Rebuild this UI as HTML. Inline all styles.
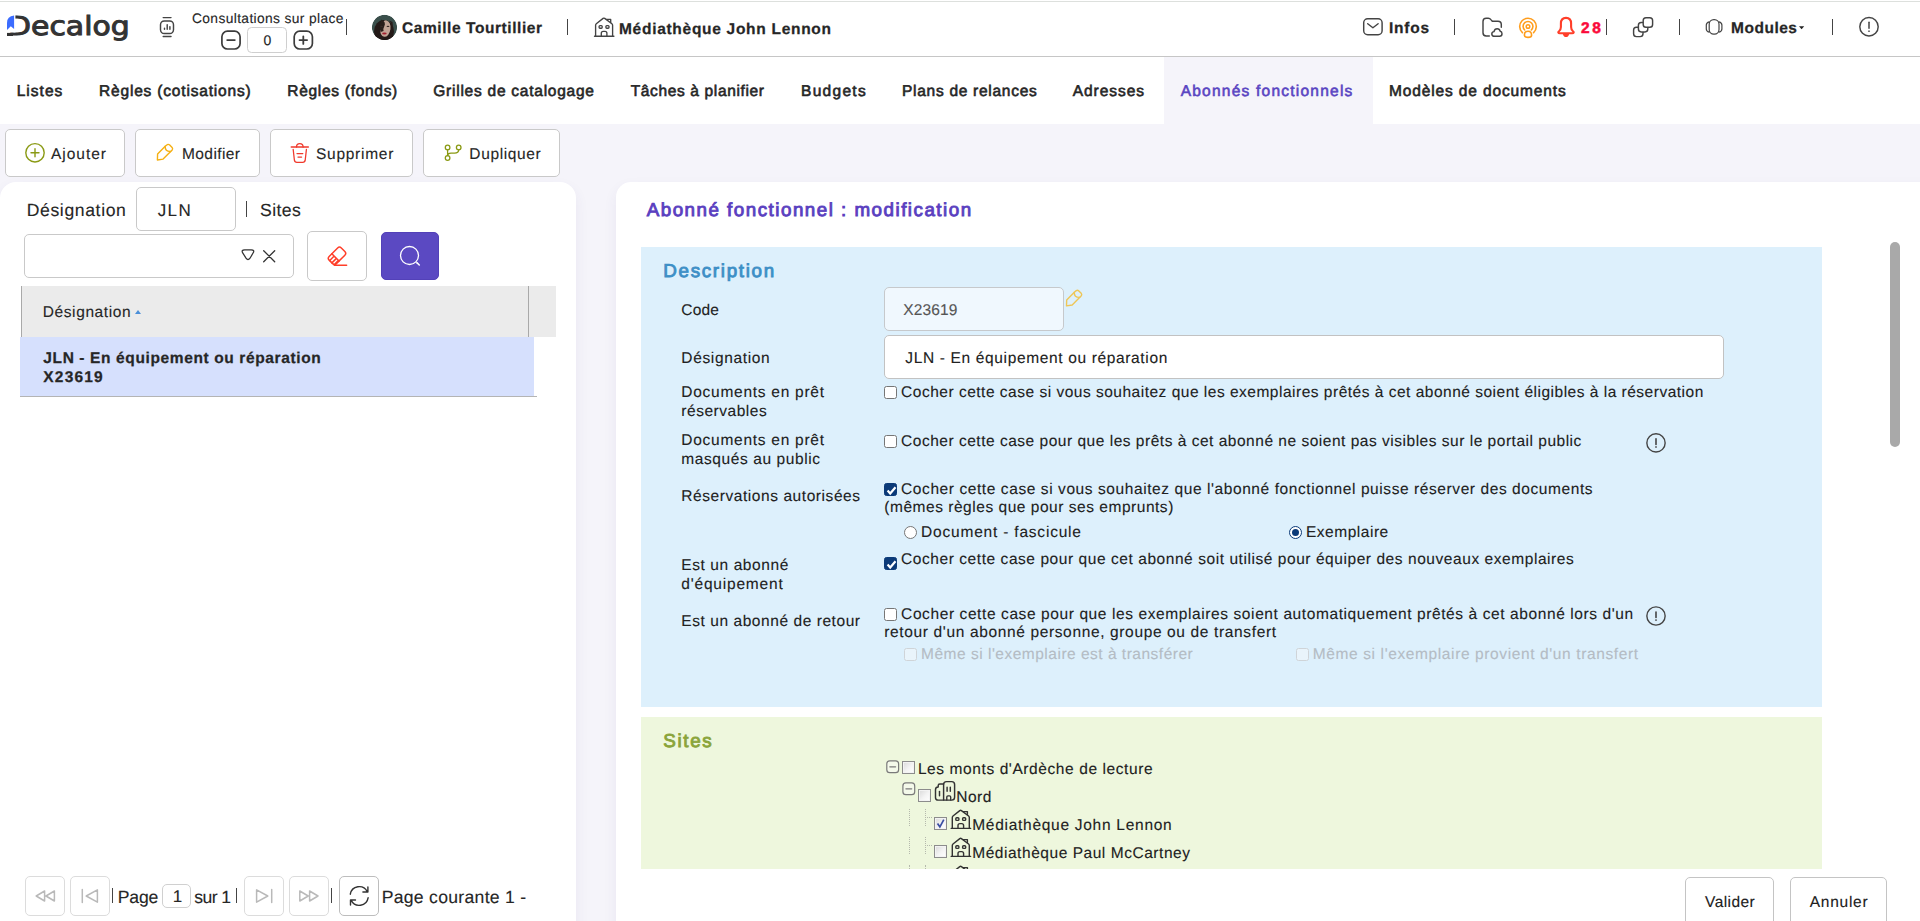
<!DOCTYPE html>
<html lang="fr"><head><meta charset="utf-8"><title>Decalog - Abonnés fonctionnels</title>
<style>
*{box-sizing:border-box;margin:0;padding:0}
html,body{width:1920px;height:921px;overflow:hidden}
body{background:#f5f4fa;font-family:"Liberation Sans",sans-serif;position:relative;color:#212121}
.a{position:absolute}
.t{position:absolute;white-space:pre;line-height:1;text-rendering:geometricPrecision}
.box{position:absolute;background:#fff;border:1px solid #c9c9c9;border-radius:5px}
svg{position:absolute;overflow:visible}
.sep{width:1px;background:#444}
.cb{width:13px;height:13px;border:1px solid #767676;border-radius:2.5px;background:#fff}
.cb.on{background:#0b3a78;border-color:#0b3a78}
.cb.dis{border-color:#cfd4d8;background:#e9f4fb}
.rd{width:13px;height:13px;border:1px solid #767676;border-radius:50%;background:#fff}
.rd.ron{border-color:#0b3a78}
.rd.ron::after{content:"";position:absolute;left:2px;top:2px;width:7px;height:7px;border-radius:50%;background:#0b3a78}
.ocb{width:13px;height:13px;border:1px solid #8c8c8c;background:linear-gradient(135deg,#d9d9d9 0%,#f4f4f4 55%,#fff 100%);box-shadow:inset 0 0 0 1px #f3f3f3}
.ov{pointer-events:none}

</style></head><body>
<!-- header -->
<div class="a" style="left:0;top:0;width:1920px;height:57px;background:#fff;border-bottom:1px solid #c6c6c6"></div>
<div class="a" style="left:0;top:1px;width:1920px;height:1px;background:#dde0dd"></div>
<!-- tab bar -->
<div class="a" style="left:0;top:57px;width:1920px;height:67px;background:#fff"></div>
<div class="a" style="left:1164px;top:57px;width:208.8px;height:67px;background:#f5f4fa"></div>
<!-- header separators -->
<div class="a sep" style="left:346px;top:19px;height:16px"></div>
<div class="a sep" style="left:567px;top:19px;height:16px"></div>
<div class="a sep" style="left:1454px;top:19px;height:16px"></div>
<div class="a sep" style="left:1606px;top:19px;height:16px"></div>
<div class="a sep" style="left:1679px;top:19px;height:16px"></div>
<div class="a sep" style="left:1832px;top:19px;height:16px"></div>
<!-- consultations counter -->
<div class="box" style="left:247px;top:27.4px;width:40px;height:25.6px;border-color:#cfcfcf;border-radius:4.5px"></div>
<!-- toolbar buttons -->
<div class="box" style="left:5px;top:129px;width:120px;height:48px"></div>
<div class="box" style="left:135px;top:129px;width:125px;height:48px"></div>
<div class="box" style="left:270px;top:129px;width:143px;height:48px"></div>
<div class="box" style="left:423px;top:129px;width:137px;height:48px"></div>
<!-- panels -->
<div class="a" style="left:0;top:182px;width:576px;height:760px;background:#fff;border-radius:16px 16px 0 0;box-shadow:0 6px 14px rgba(70,60,130,0.07)"></div>
<div class="a" style="left:616px;top:182px;width:1330px;height:760px;background:#fff;border-radius:15px 0 0 0;box-shadow:0 6px 14px rgba(70,60,130,0.07)"></div>
<!-- left filters -->
<div class="box" style="left:136px;top:187px;width:100px;height:44px"></div>
<div class="a sep" style="left:246px;top:201px;height:16px"></div>
<div class="box" style="left:24px;top:234px;width:270px;height:44px"></div>
<div class="box" style="left:307px;top:231px;width:60px;height:50px"></div>
<div class="a" style="left:380.7px;top:231.6px;width:58.7px;height:48.6px;background:#5b49c2;border:1px solid #5341b8;border-radius:5px"></div>
<!-- grid -->
<div class="a" style="left:21px;top:286.4px;width:535px;height:50.6px;background:#ebebeb;border-left:1px solid #a9a9a9"></div>
<div class="a" style="left:528px;top:286.4px;width:1px;height:50.6px;background:#a9a9a9"></div>
<div class="a" style="left:20px;top:337px;width:514px;height:59px;background:#d6e0fd"></div>
<div class="a" style="left:20px;top:396px;width:517px;height:1px;background:#b4b4b4"></div>
<div class="a" style="left:134.7px;top:310px;width:0;height:0;border-left:3.9px solid transparent;border-right:3.9px solid transparent;border-bottom:4.3px solid #4a8fd8"></div>
<!-- pager -->
<div class="box" style="left:25px;top:876px;width:40px;height:40px;border-color:#dcdcdc"></div>
<div class="box" style="left:70px;top:876px;width:40px;height:40px;border-color:#dcdcdc"></div>
<div class="a sep" style="left:112px;top:888px;height:15px"></div>
<div class="box" style="left:162px;top:884px;width:29px;height:24px;border-color:#d0d0d0"></div>
<div class="a sep" style="left:236px;top:888px;height:15px"></div>
<div class="box" style="left:244px;top:876px;width:40px;height:40px;border-color:#dcdcdc"></div>
<div class="box" style="left:289px;top:876px;width:40px;height:40px;border-color:#dcdcdc"></div>
<div class="a sep" style="left:331px;top:888px;height:15px"></div>
<div class="box" style="left:339px;top:876px;width:40px;height:40px;border-color:#bdbdbd"></div>
<!-- right: description -->
<div class="a" style="left:641px;top:247px;width:1181px;height:460px;background:#ddf0fc"></div>
<div class="box" style="left:884px;top:287px;width:180px;height:44px;background:#f0f8fe;border-color:#c6c9cc"></div>
<div class="box" style="left:884px;top:335px;width:840px;height:44px;border-color:#c2c2c2"></div>
<!-- checkboxes -->
<div class="a cb" style="left:884px;top:386px"></div>
<div class="a cb" style="left:884px;top:435px"></div>
<div class="a cb on" style="left:884px;top:483px"><svg style="left:0;top:0" width="13" height="13" viewBox="0 0 13 13"><path d="M2.6 6.6 5.2 9.5 10.5 3.3" fill="none" stroke="#fff" stroke-width="2.2"/></svg></div>
<div class="a cb on" style="left:884px;top:557px"><svg style="left:0;top:0" width="13" height="13" viewBox="0 0 13 13"><path d="M2.6 6.6 5.2 9.5 10.5 3.3" fill="none" stroke="#fff" stroke-width="2.2"/></svg></div>
<div class="a cb" style="left:884px;top:608px"></div>
<div class="a cb dis" style="left:904px;top:648px"></div>
<div class="a cb dis" style="left:1296px;top:648px"></div>
<div class="a rd" style="left:904px;top:526px"></div>
<div class="a rd ron" style="left:1289px;top:526px"></div>
<!-- sites -->
<div class="a" style="left:641px;top:717px;width:1181px;height:152px;background:#eef7dd;overflow:hidden" id="sites">
<div class="a ocb" style="left:261px;top:44px"></div>
<div class="a ocb" style="left:277px;top:72px"></div>
<div class="a ocb" style="left:293px;top:100px"></div>
<div class="a ocb" style="left:293px;top:128px"></div>
<div class="a" style="left:268px;top:92px;width:0;height:17px;border-left:1px dotted #b5b9ad"></div>
<div class="a" style="left:284px;top:92px;width:0;height:17px;border-left:1px dotted #b5b9ad"></div>
<div class="a" style="left:284px;top:100px;width:7px;height:0;border-top:1px dotted #b5b9ad"></div>
<div class="a" style="left:268px;top:120px;width:0;height:17px;border-left:1px dotted #b5b9ad"></div>
<div class="a" style="left:284px;top:120px;width:0;height:17px;border-left:1px dotted #b5b9ad"></div>
<div class="a" style="left:284px;top:128px;width:7px;height:0;border-top:1px dotted #b5b9ad"></div>
<div class="a" style="left:268px;top:148px;width:0;height:10px;border-left:1px dotted #b5b9ad"></div>
<div class="a" style="left:284px;top:148px;width:0;height:10px;border-left:1px dotted #b5b9ad"></div>
<svg class="ov" width="1181" height="152" viewBox="641 717 1181 152" style="left:0;top:0"><rect x="886.8" y="760.9" width="11.8" height="11.8" rx="3" fill="#f4f9ea" stroke="#7a7a7a" stroke-width="1.2" />
<path d="M889.8 766.8 H895.6" fill="none" stroke="#7a7a7a" stroke-width="1.2" stroke-linecap="round" stroke-linejoin="round" />
<rect x="902.9" y="782.9" width="11.8" height="11.8" rx="3" fill="#f4f9ea" stroke="#7a7a7a" stroke-width="1.2" />
<path d="M905.9 788.8 H911.7" fill="none" stroke="#7a7a7a" stroke-width="1.2" stroke-linecap="round" stroke-linejoin="round" />
<path d="M943.6 800.1 H938.2 Q935.5 800.1 935.5 797.4 V789.7 Q935.5 787 938.2 787 V785.6 Q938.2 783.9 939.9 783.9 H943.6" fill="none" stroke="#333" stroke-width="1.45" stroke-linecap="round" stroke-linejoin="round" />
<path d="M939.5 791.4 V795.8" fill="none" stroke="#333" stroke-width="1.45" stroke-linecap="round" stroke-linejoin="round" />
<path d="M943.6 800.1 V784.5 Q943.6 781.6 946.5 781.6 H951.7 Q954.6 781.6 954.6 784.5 V797.3 Q954.6 800.1 951.8 800.1 Z" fill="none" stroke="#333" stroke-width="1.45" stroke-linecap="round" stroke-linejoin="round" />
<path d="M947.1 787.2 V791.2 M950.3 787.2 V791.2" fill="none" stroke="#333" stroke-width="1.45" stroke-linecap="round" stroke-linejoin="round" />
<path d="M946.8 800.1 V797 Q946.8 795.8 948 795.8 H949.5 Q950.7 795.8 950.7 797 V800.1" fill="none" stroke="#333" stroke-width="1.35" stroke-linecap="round" stroke-linejoin="round" />
<path d="M951.20 828.40 H970.60" fill="none" stroke="#333" stroke-width="1.4" stroke-linecap="round" stroke-linejoin="round" />
<path d="M952.30 828.40 V817.50 Q952.30 816.60 953.00 816.00 L959.80 810.60 Q960.60 810.00 961.40 810.60 L968.60 816.00 Q969.30 816.60 969.30 817.50 V828.40" fill="none" stroke="#333" stroke-width="1.4" stroke-linecap="round" stroke-linejoin="round" />
<path d="M963.20 811.60 H967.40 V814.80" fill="none" stroke="#333" stroke-width="1.4" stroke-linecap="round" stroke-linejoin="round" />
<rect x="955.8" y="817.8" width="3.1" height="2.6" rx="0.9" fill="none" stroke="#333" stroke-width="1.4" />
<rect x="962.6" y="817.8" width="3.1" height="2.6" rx="0.9" fill="none" stroke="#333" stroke-width="1.4" />
<path d="M958.00 828.40 V825.50 Q958.00 823.60 959.90 823.60 H961.70 Q963.60 823.60 963.60 825.50 V828.40" fill="none" stroke="#333" stroke-width="1.4" stroke-linecap="round" stroke-linejoin="round" />
<path d="M951.20 856.40 H970.60" fill="none" stroke="#333" stroke-width="1.4" stroke-linecap="round" stroke-linejoin="round" />
<path d="M952.30 856.40 V845.50 Q952.30 844.60 953.00 844.00 L959.80 838.60 Q960.60 838.00 961.40 838.60 L968.60 844.00 Q969.30 844.60 969.30 845.50 V856.40" fill="none" stroke="#333" stroke-width="1.4" stroke-linecap="round" stroke-linejoin="round" />
<path d="M963.20 839.60 H967.40 V842.80" fill="none" stroke="#333" stroke-width="1.4" stroke-linecap="round" stroke-linejoin="round" />
<rect x="955.8" y="845.8" width="3.1" height="2.6" rx="0.9" fill="none" stroke="#333" stroke-width="1.4" />
<rect x="962.6" y="845.8" width="3.1" height="2.6" rx="0.9" fill="none" stroke="#333" stroke-width="1.4" />
<path d="M958.00 856.40 V853.50 Q958.00 851.60 959.90 851.60 H961.70 Q963.60 851.60 963.60 853.50 V856.40" fill="none" stroke="#333" stroke-width="1.4" stroke-linecap="round" stroke-linejoin="round" />
<path d="M951.20 884.40 H970.60" fill="none" stroke="#333" stroke-width="1.4" stroke-linecap="round" stroke-linejoin="round" />
<path d="M952.30 884.40 V873.50 Q952.30 872.60 953.00 872.00 L959.80 866.60 Q960.60 866.00 961.40 866.60 L968.60 872.00 Q969.30 872.60 969.30 873.50 V884.40" fill="none" stroke="#333" stroke-width="1.4" stroke-linecap="round" stroke-linejoin="round" />
<path d="M963.20 867.60 H967.40 V870.80" fill="none" stroke="#333" stroke-width="1.4" stroke-linecap="round" stroke-linejoin="round" />
<rect x="955.8" y="873.8" width="3.1" height="2.6" rx="0.9" fill="none" stroke="#333" stroke-width="1.4" />
<rect x="962.6" y="873.8" width="3.1" height="2.6" rx="0.9" fill="none" stroke="#333" stroke-width="1.4" />
<path d="M958.00 884.40 V881.50 Q958.00 879.60 959.90 879.60 H961.70 Q963.60 879.60 963.60 881.50 V884.40" fill="none" stroke="#333" stroke-width="1.4" stroke-linecap="round" stroke-linejoin="round" />
<path d="M937.5 823.4 L939.9 826.8 L943.8 819.7" fill="none" stroke="#3a4ea3" stroke-width="1.7"/></svg>
</div>
<!-- scrollbar -->
<div class="a" style="left:1890px;top:242px;width:10px;height:205px;background:#a9a9a9;border-radius:5px"></div>
<!-- buttons -->
<div class="box" style="left:1685px;top:877px;width:89px;height:60px;border-color:#c4c4c4"></div>
<div class="box" style="left:1790px;top:877px;width:97px;height:60px;border-color:#c4c4c4"></div>



<div id="txt">
<span class="t" style="left:7.60px;top:14px;font-size:26.2px;color:#333;letter-spacing:0.022px;-webkit-text-stroke:1.0px #333;transform:scaleX(1.14);transform-origin:0 0;font-family:'DejaVu Sans',sans-serif;">Decalog</span>
<span class="t" style="left:192.00px;top:12px;font-size:13.8px;color:#262626;letter-spacing:0.366px;-webkit-text-stroke:0.12px #262626;">Consultations sur place</span>
<span class="t" style="left:263.50px;top:33px;font-size:14px;color:#262626;-webkit-text-stroke:0.12px #262626;">0</span>
<span class="t" style="left:402.00px;top:21px;font-size:15.5px;color:#262626;font-weight:700;letter-spacing:0.569px;-webkit-text-stroke:0.25px #262626;">Camille Tourtillier</span>
<span class="t" style="left:619.00px;top:22px;font-size:15.5px;color:#262626;font-weight:700;letter-spacing:0.713px;-webkit-text-stroke:0.25px #262626;">Médiathèque John Lennon</span>
<span class="t" style="left:1389.00px;top:21px;font-size:15.5px;color:#262626;font-weight:700;letter-spacing:0.750px;-webkit-text-stroke:0.25px #262626;">Infos</span>
<span class="t" style="left:1581.00px;top:21px;font-size:15.5px;color:#fb0a3a;font-weight:700;letter-spacing:2.750px;-webkit-text-stroke:0.5px #fb0a3a;">28</span>
<span class="t" style="left:1731.00px;top:21px;font-size:15.5px;color:#262626;font-weight:700;letter-spacing:0.521px;-webkit-text-stroke:0.25px #262626;">Modules</span>
<span class="t" style="left:16.70px;top:84px;font-size:15.5px;color:#262626;letter-spacing:1.020px;-webkit-text-stroke:0.6px #262626;">Listes</span>
<span class="t" style="left:99.00px;top:84px;font-size:15.5px;color:#262626;letter-spacing:0.820px;-webkit-text-stroke:0.6px #262626;">Règles (cotisations)</span>
<span class="t" style="left:287.30px;top:84px;font-size:15.5px;color:#262626;letter-spacing:0.707px;-webkit-text-stroke:0.6px #262626;">Règles (fonds)</span>
<span class="t" style="left:433.30px;top:84px;font-size:15.5px;color:#262626;letter-spacing:0.754px;-webkit-text-stroke:0.6px #262626;">Grilles de catalogage</span>
<span class="t" style="left:630.70px;top:84px;font-size:15.5px;color:#262626;letter-spacing:0.646px;-webkit-text-stroke:0.6px #262626;">Tâches à planifier</span>
<span class="t" style="left:801.00px;top:84px;font-size:15.5px;color:#262626;letter-spacing:1.304px;-webkit-text-stroke:0.6px #262626;">Budgets</span>
<span class="t" style="left:902.00px;top:84px;font-size:15.5px;color:#262626;letter-spacing:0.720px;-webkit-text-stroke:0.6px #262626;">Plans de relances</span>
<span class="t" style="left:1072.70px;top:84px;font-size:15.5px;color:#262626;letter-spacing:0.954px;-webkit-text-stroke:0.6px #262626;">Adresses</span>
<span class="t" style="left:1389.00px;top:84px;font-size:15.5px;color:#262626;letter-spacing:0.866px;-webkit-text-stroke:0.6px #262626;">Modèles de documents</span>
<span class="t" style="left:1180.70px;top:84px;font-size:15.5px;color:#5a45c2;letter-spacing:1.232px;-webkit-text-stroke:0.6px #5a45c2;">Abonnés fonctionnels</span>
<span class="t" style="left:51.00px;top:147px;font-size:15.5px;color:#262626;letter-spacing:0.979px;-webkit-text-stroke:0.12px #262626;">Ajouter</span>
<span class="t" style="left:182.00px;top:147px;font-size:15.5px;color:#262626;letter-spacing:0.411px;-webkit-text-stroke:0.12px #262626;">Modifier</span>
<span class="t" style="left:316.00px;top:147px;font-size:15.5px;color:#262626;letter-spacing:0.725px;-webkit-text-stroke:0.12px #262626;">Supprimer</span>
<span class="t" style="left:469.30px;top:147px;font-size:15.5px;color:#262626;letter-spacing:0.636px;-webkit-text-stroke:0.12px #262626;">Dupliquer</span>
<span class="t" style="left:26.70px;top:202px;font-size:17.6px;color:#262626;letter-spacing:0.625px;-webkit-text-stroke:0.12px #262626;">Désignation</span>
<span class="t" style="left:157.70px;top:202px;font-size:17.0px;color:#262626;letter-spacing:1.375px;-webkit-text-stroke:0.12px #262626;">JLN</span>
<span class="t" style="left:260.00px;top:202px;font-size:17.6px;color:#262626;letter-spacing:0.409px;-webkit-text-stroke:0.12px #262626;">Sites</span>
<span class="t" style="left:42.70px;top:305px;font-size:15.5px;color:#262626;letter-spacing:0.612px;-webkit-text-stroke:0.12px #262626;">Désignation</span>
<span class="t" style="left:43.30px;top:351px;font-size:15.5px;color:#262626;font-weight:700;letter-spacing:0.622px;-webkit-text-stroke:0.25px #262626;">JLN - En équipement ou réparation</span>
<span class="t" style="left:43.30px;top:370px;font-size:15.5px;color:#262626;font-weight:700;letter-spacing:1.193px;-webkit-text-stroke:0.25px #262626;">X23619</span>
<span class="t" style="left:117.70px;top:889px;font-size:17.6px;color:#262626;letter-spacing:-0.133px;-webkit-text-stroke:0.12px #262626;">Page</span>
<span class="t" style="left:172.80px;top:888px;font-size:17.0px;color:#262626;-webkit-text-stroke:0.12px #262626;">1</span>
<span class="t" style="left:194.30px;top:889px;font-size:17.6px;color:#262626;letter-spacing:-0.591px;-webkit-text-stroke:0.12px #262626;">sur 1</span>
<span class="t" style="left:381.70px;top:889px;font-size:17.6px;color:#262626;letter-spacing:0.292px;-webkit-text-stroke:0.12px #262626;">Page courante 1 -</span>
<span class="t" style="left:646.70px;top:201px;font-size:18.8px;color:#5a3fc0;letter-spacing:1.492px;-webkit-text-stroke:0.9px #5a3fc0;">Abonné fonctionnel : modification</span>
<span class="t" style="left:663.30px;top:262px;font-size:18.8px;color:#3d8fc6;letter-spacing:1.689px;-webkit-text-stroke:0.9px #3d8fc6;">Description</span>
<span class="t" style="left:681.30px;top:303px;font-size:15.5px;color:#212121;letter-spacing:0.213px;-webkit-text-stroke:0.12px #212121;">Code</span>
<span class="t" style="left:903.30px;top:303px;font-size:15.5px;color:#555;letter-spacing:0.113px;-webkit-text-stroke:0.12px #555;">X23619</span>
<span class="t" style="left:681.30px;top:351px;font-size:15.5px;color:#212121;letter-spacing:0.653px;-webkit-text-stroke:0.12px #212121;">Désignation</span>
<span class="t" style="left:905.30px;top:351px;font-size:15.5px;color:#212121;letter-spacing:0.648px;-webkit-text-stroke:0.12px #212121;">JLN - En équipement ou réparation</span>
<span class="t" style="left:681.30px;top:385px;font-size:15.5px;color:#212121;letter-spacing:0.735px;-webkit-text-stroke:0.12px #212121;">Documents en prêt</span>
<span class="t" style="left:681.30px;top:404px;font-size:15.5px;color:#212121;letter-spacing:0.528px;-webkit-text-stroke:0.12px #212121;">réservables</span>
<span class="t" style="left:901.10px;top:385px;font-size:15.5px;color:#212121;letter-spacing:0.503px;-webkit-text-stroke:0.12px #212121;">Cocher cette case si vous souhaitez que les exemplaires prêtés à cet abonné soient éligibles à la réservation</span>
<span class="t" style="left:681.30px;top:433px;font-size:15.5px;color:#212121;letter-spacing:0.735px;-webkit-text-stroke:0.12px #212121;">Documents en prêt</span>
<span class="t" style="left:681.30px;top:452px;font-size:15.5px;color:#212121;letter-spacing:0.591px;-webkit-text-stroke:0.12px #212121;">masqués au public</span>
<span class="t" style="left:901.10px;top:434px;font-size:15.5px;color:#212121;letter-spacing:0.514px;-webkit-text-stroke:0.12px #212121;">Cocher cette case pour que les prêts à cet abonné ne soient pas visibles sur le portail public</span>
<span class="t" style="left:681.30px;top:489px;font-size:15.5px;color:#212121;letter-spacing:0.566px;-webkit-text-stroke:0.12px #212121;">Réservations autorisées</span>
<span class="t" style="left:901.10px;top:482px;font-size:15.5px;color:#212121;letter-spacing:0.582px;-webkit-text-stroke:0.12px #212121;">Cocher cette case si vous souhaitez que l&#x27;abonné fonctionnel puisse réserver des documents</span>
<span class="t" style="left:884.30px;top:500px;font-size:15.5px;color:#212121;letter-spacing:0.529px;-webkit-text-stroke:0.12px #212121;">(mêmes règles que pour ses emprunts)</span>
<span class="t" style="left:921.10px;top:525px;font-size:15.5px;color:#212121;letter-spacing:0.797px;-webkit-text-stroke:0.12px #212121;">Document - fascicule</span>
<span class="t" style="left:1305.90px;top:525px;font-size:15.5px;color:#212121;letter-spacing:0.533px;-webkit-text-stroke:0.12px #212121;">Exemplaire</span>
<span class="t" style="left:681.30px;top:558px;font-size:15.5px;color:#212121;letter-spacing:0.583px;-webkit-text-stroke:0.12px #212121;">Est un abonné</span>
<span class="t" style="left:681.30px;top:577px;font-size:15.5px;color:#212121;letter-spacing:0.803px;-webkit-text-stroke:0.12px #212121;">d&#x27;équipement</span>
<span class="t" style="left:901.10px;top:552px;font-size:15.5px;color:#212121;letter-spacing:0.561px;-webkit-text-stroke:0.12px #212121;">Cocher cette case pour que cet abonné soit utilisé pour équiper des nouveaux exemplaires</span>
<span class="t" style="left:681.30px;top:614px;font-size:15.5px;color:#212121;letter-spacing:0.563px;-webkit-text-stroke:0.12px #212121;">Est un abonné de retour</span>
<span class="t" style="left:901.10px;top:607px;font-size:15.5px;color:#212121;letter-spacing:0.598px;-webkit-text-stroke:0.12px #212121;">Cocher cette case pour que les exemplaires soient automatiquement prêtés à cet abonné lors d&#x27;un</span>
<span class="t" style="left:884.30px;top:625px;font-size:15.5px;color:#212121;letter-spacing:0.640px;-webkit-text-stroke:0.12px #212121;">retour d&#x27;un abonné personne, groupe ou de transfert</span>
<span class="t" style="left:921.10px;top:647px;font-size:15.5px;color:#b4bcc4;letter-spacing:0.499px;-webkit-text-stroke:0.12px #b4bcc4;">Même si l&#x27;exemplaire est à transférer</span>
<span class="t" style="left:1312.80px;top:647px;font-size:15.5px;color:#b4bcc4;letter-spacing:0.614px;-webkit-text-stroke:0.12px #b4bcc4;">Même si l&#x27;exemplaire provient d&#x27;un transfert</span>
<span class="t" style="left:663.30px;top:732px;font-size:18.8px;color:#8aa43a;letter-spacing:1.678px;-webkit-text-stroke:0.9px #8aa43a;">Sites</span>
<span class="t" style="left:917.90px;top:762px;font-size:15.5px;color:#212121;letter-spacing:0.593px;-webkit-text-stroke:0.12px #212121;">Les monts d&#x27;Ardèche de lecture</span>
<span class="t" style="left:956.30px;top:790px;font-size:15.5px;color:#212121;letter-spacing:0.458px;-webkit-text-stroke:0.12px #212121;">Nord</span>
<span class="t" style="left:972.20px;top:818px;font-size:15.5px;color:#212121;letter-spacing:0.724px;-webkit-text-stroke:0.12px #212121;">Médiathèque John Lennon</span>
<span class="t" style="left:972.20px;top:846px;font-size:15.5px;color:#212121;letter-spacing:0.544px;-webkit-text-stroke:0.12px #212121;">Médiathèque Paul McCartney</span>
<span class="t" style="left:1705.00px;top:895px;font-size:15.5px;color:#212121;letter-spacing:0.446px;-webkit-text-stroke:0.12px #212121;">Valider</span>
<span class="t" style="left:1809.80px;top:895px;font-size:15.5px;color:#212121;letter-spacing:0.727px;-webkit-text-stroke:0.12px #212121;">Annuler</span>
</div>
<svg class="ov" width="1920" height="921" viewBox="0 0 1920 921" style="left:0;top:0"><rect x="5" y="12" width="10.4" height="20.6" fill="#fff"/>
<rect x="7" y="32.9" width="6" height="3.1" fill="#333"/>
<path d="M14.1 15.6 L14.1 29 L10.8 26.2 L7 29.9 L7 23 Q7 16.2 14.1 15.6 Z" fill="#3b6cff"/>
<rect x="160.5" y="21" width="13" height="12.5" rx="3.8" fill="none" stroke="#444" stroke-width="1.45" />
<path d="M163.2 17.6 H171 M163.2 36.5 H171" fill="none" stroke="#444" stroke-width="1.45" stroke-linecap="round" stroke-linejoin="round" />
<path d="M164.5 28.3 v1 M167.2 24.8 v4.5 M169.9 26.6 v2.7" fill="none" stroke="#444" stroke-width="1.45" stroke-linecap="round" stroke-linejoin="round" />
<rect x="221.9" y="31.2" width="18.2" height="17.8" rx="5.6" fill="none" stroke="#3c3c3c" stroke-width="1.7" />
<path d="M227.2 40.1 h7.6" fill="none" stroke="#3c3c3c" stroke-width="1.8" stroke-linecap="round" stroke-linejoin="round" />
<rect x="294.2" y="31.2" width="18.2" height="17.8" rx="5.6" fill="none" stroke="#3c3c3c" stroke-width="1.7" />
<path d="M299.5 40.1 h7.6 M303.3 36.3 v7.6" fill="none" stroke="#3c3c3c" stroke-width="1.8" stroke-linecap="round" stroke-linejoin="round" />
<clipPath id="avc"><circle cx="384.5" cy="27.4" r="12.6"/></clipPath>
<g clip-path="url(#avc)">
<circle cx="384.5" cy="27.4" r="12.6" fill="#3a4f4b"/>
<ellipse cx="384" cy="31.5" rx="10" ry="11.6" fill="#231917"/>
<ellipse cx="385.3" cy="28.6" rx="5.2" ry="8.3" transform="rotate(8 385.3 28.6)" fill="#c2a294"/>
<path d="M381.5 19.5 Q386.5 22 384.2 26.5 Q382.6 29.5 383.6 31 L380.6 32 Q378.5 26 381.5 19.5 Z" fill="#2a1d1a"/>
<path d="M389 20.5 Q392.5 24 391 33 Q393.5 28 392.5 22 Z" fill="#2a1d1a"/>
<ellipse cx="381.6" cy="26.4" rx="1.3" ry="0.6" fill="#3a2a28"/>
<ellipse cx="388" cy="26.4" rx="1.4" ry="0.6" fill="#3a2a28"/>
<ellipse cx="384.4" cy="33.5" rx="2.3" ry="0.95" fill="#a3202f"/>
<path d="M372 36 Q380 42 392 38 L392 41 L372 41 Z" fill="#1c1312"/>
</g>
<path d="M594.50 36.20 H613.90" fill="none" stroke="#444" stroke-width="1.35" stroke-linecap="round" stroke-linejoin="round" />
<path d="M595.60 36.20 V25.30 Q595.60 24.40 596.30 23.80 L603.10 18.40 Q603.90 17.80 604.70 18.40 L611.90 23.80 Q612.60 24.40 612.60 25.30 V36.20" fill="none" stroke="#444" stroke-width="1.35" stroke-linecap="round" stroke-linejoin="round" />
<path d="M606.50 19.40 H610.70 V22.60" fill="none" stroke="#444" stroke-width="1.35" stroke-linecap="round" stroke-linejoin="round" />
<rect x="599.1" y="25.6" width="3.1" height="2.6" rx="0.9" fill="none" stroke="#444" stroke-width="1.35" />
<rect x="605.9" y="25.6" width="3.1" height="2.6" rx="0.9" fill="none" stroke="#444" stroke-width="1.35" />
<path d="M601.30 36.20 V33.30 Q601.30 31.40 603.20 31.40 H605.00 Q606.90 31.40 606.90 33.30 V36.20" fill="none" stroke="#444" stroke-width="1.35" stroke-linecap="round" stroke-linejoin="round" />
<rect x="1363.7" y="18.8" width="18.4" height="15.9" rx="4" fill="none" stroke="#444" stroke-width="1.45" />
<path d="M1367.7 23.7 L1372.9 27.7 L1378.1 23.7" fill="none" stroke="#444" stroke-width="1.45" stroke-linecap="round" stroke-linejoin="round" />
<path d="M1489.3 36 H1486.2 Q1483 36 1483 32.8 V21.5 Q1483 18.3 1486.2 18.3 H1488.3 Q1489.9 18.3 1490.9 19.6 L1492.3 21.3 H1498 Q1501.3 21.3 1501.3 24.6 V27.2" fill="none" stroke="#444" stroke-width="1.45" stroke-linecap="round" stroke-linejoin="round" />
<path d="M1494.6 36.3 Q1491.8 36.3 1491.8 33.9 Q1491.8 31.8 1494 31.6 Q1494.6 28.8 1497.2 28.8 Q1499.6 28.8 1500.2 31.2 Q1502 31.6 1502 33.8 Q1502 36.3 1499.6 36.3 Z" fill="none" stroke="#444" stroke-width="1.45" stroke-linecap="round" stroke-linejoin="round" />
<path d="M1522.4 32.7 A8.3 8.3 0 1 1 1533.6 32.7" fill="none" stroke="#ff9d1c" stroke-width="1.6" stroke-linecap="round" stroke-linejoin="round" />
<path d="M1524.7 30.0 A4.9 4.9 0 1 1 1531.3 30.0" fill="none" stroke="#ff9d1c" stroke-width="1.6" stroke-linecap="round" stroke-linejoin="round" />
<circle cx="1528" cy="26.5" r="1.8" fill="none" stroke="#ff9d1c" stroke-width="1.5" />
<path d="M1524.4 35.3 Q1524.4 31.2 1528 31.2 Q1531.6 31.2 1531.6 35.3 Q1531.6 37.4 1528 37.4 Q1524.4 37.4 1524.4 35.3 Z" fill="none" stroke="#ff9d1c" stroke-width="1.6" stroke-linecap="round" stroke-linejoin="round" />
<path d="M1566 17.9 Q1560.9 17.9 1560.9 23.6 V27 Q1560.9 29.6 1559 31.2 Q1558 32 1558.3 32.6 Q1558.6 33.2 1559.8 33.2 H1572.2 Q1573.4 33.2 1573.7 32.6 Q1574 32 1573 31.2 Q1571.1 29.6 1571.1 27 V23.6 Q1571.1 17.9 1566 17.9 Z" fill="none" stroke="#ff3e29" stroke-width="2.1" stroke-linecap="round" stroke-linejoin="round" />
<path d="M1562.8 34 H1569.2 Q1568.5 37.1 1566 37.1 Q1563.5 37.1 1562.8 34 Z" fill="#ff3e29"/>
<rect x="1633.6" y="27.2" width="9.4" height="9.4" rx="2.8" fill="#fff" stroke="#444" stroke-width="1.45" />
<rect x="1638.4" y="22.5" width="9.4" height="9.4" rx="2.8" fill="#fff" stroke="#444" stroke-width="1.45" />
<rect x="1643.2" y="17.8" width="9.4" height="9.4" rx="2.8" fill="#fff" stroke="#444" stroke-width="1.45" />
<rect x="1709.2" y="19.7" width="9.8" height="14.5" rx="4.6" fill="none" stroke="#444" stroke-width="1.2" />
<path d="M1709.2 21.8 Q1706.3 22.6 1706.3 25 V29 Q1706.3 31.4 1709.2 32.2 M1719 21.8 Q1721.9 22.6 1721.9 25 V29 Q1721.9 31.4 1719 32.2" fill="none" stroke="#444" stroke-width="1.2" stroke-linecap="round" stroke-linejoin="round" />
<path d="M1799 26.2 H1804.2 L1801.6 29.2 Z" fill="#222"/>
<circle cx="1869" cy="26.8" r="9.2" fill="none" stroke="#444" stroke-width="1.45" />
<path d="M1869 22.3 V28.2" fill="none" stroke="#444" stroke-width="1.5" stroke-linecap="round" stroke-linejoin="round" />
<circle cx="1869" cy="31.2" r="0.5" fill="none" stroke="#444" stroke-width="1" />
<circle cx="35" cy="152.8" r="9.2" fill="none" stroke="#8a9a14" stroke-width="1.4" />
<path d="M31 152.8 h8 M35 148.8 v8" fill="none" stroke="#8a9a14" stroke-width="1.4" stroke-linecap="round" stroke-linejoin="round" />
<path d="M165.20 146.30 L167.20 144.70 Q168.50 144.00 169.70 145.00 L172.10 147.40 Q173.10 148.60 172.20 149.90 L163.10 159.10 L157.40 160.00 L157.60 154.10 Z" fill="none" stroke="#f5b014" stroke-width="1.4" stroke-linecap="round" stroke-linejoin="round" />
<path d="M165.20 146.30 Q164.80 151.70 170.60 151.50" fill="none" stroke="#f5b014" stroke-width="1.4" stroke-linecap="round" stroke-linejoin="round" />
<path d="M291.2 147 H308.4" fill="none" stroke="#f03a2d" stroke-width="1.3" stroke-linecap="round" stroke-linejoin="round" />
<path d="M296.5 147 Q296.5 143.7 299.8 143.7 Q303.1 143.7 303.1 147" fill="none" stroke="#f03a2d" stroke-width="1.3" stroke-linecap="round" stroke-linejoin="round" />
<path d="M293.2 149.5 L294.4 160.2 Q294.7 162.4 296.9 162.4 H302.7 Q304.9 162.4 305.2 160.2 L306.4 149.5" fill="none" stroke="#f03a2d" stroke-width="1.3" stroke-linecap="round" stroke-linejoin="round" />
<path d="M297 153.6 H302.8 M298 157.1 H301.6" fill="none" stroke="#f03a2d" stroke-width="1.3" stroke-linecap="round" stroke-linejoin="round" />
<circle cx="447.6" cy="147.5" r="2.3" fill="none" stroke="#8a9a14" stroke-width="1.3" />
<circle cx="458.7" cy="147.5" r="2.3" fill="none" stroke="#8a9a14" stroke-width="1.3" />
<circle cx="447.6" cy="158" r="2.3" fill="none" stroke="#8a9a14" stroke-width="1.3" />
<path d="M447.6 149.8 V155.7 M458.7 149.8 Q458.7 153.2 454.5 153.2 H451 Q447.6 153.2 447.6 155.7" fill="none" stroke="#8a9a14" stroke-width="1.3" stroke-linecap="round" stroke-linejoin="round" />
<path d="M244.6 249.9 H251.3 Q254.9 249.9 253.2 252.8 L250 258.2 Q248 261 246 258.2 L242.7 252.8 Q241 249.9 244.6 249.9 Z" fill="none" stroke="#333" stroke-width="1.25" stroke-linecap="round" stroke-linejoin="round" />
<path d="M263.7 250.7 L274.7 261.7 M274.7 250.7 L263.7 261.7" fill="none" stroke="#333" stroke-width="1.3" stroke-linecap="round" stroke-linejoin="round" />
<g transform="translate(337 255.8) rotate(-45)" fill="none" stroke="#ff3e29" stroke-width="1.5" stroke-linecap="round"><rect x="-8.6" y="-5.1" width="17.2" height="10.2" rx="2.6"/><path d="M-2.2 -5.1 V5.1 M-8.4 -1.8 H-2.2 M-8.6 1.4 H-2.2 M-7 4.3 H-2.2"/></g>
<path d="M334.4 265.2 H346.6" fill="none" stroke="#ff3e29" stroke-width="1.5" stroke-linecap="round" stroke-linejoin="round" />
<circle cx="409.5" cy="255.5" r="9" fill="none" stroke="#fff" stroke-width="1.3" />
<path d="M416.9 262.6 L419.3 265" fill="none" stroke="#fff" stroke-width="1.5" stroke-linecap="round" stroke-linejoin="round" />
<path d="M44.6 891 V901 L36.2 896 Z M54.4 891 V901 L46 896 Z" fill="none" stroke="#b9b9b9" stroke-width="1.5" stroke-linecap="round" stroke-linejoin="round" />
<path d="M82.3 889.6 V902.4 M97.4 889.8 V902.2 L86.2 896 Z" fill="none" stroke="#b9b9b9" stroke-width="1.5" stroke-linecap="round" stroke-linejoin="round" />
<path d="M256.6 889.8 V902.2 L267.8 896 Z M271.7 889.6 V902.4" fill="none" stroke="#b9b9b9" stroke-width="1.5" stroke-linecap="round" stroke-linejoin="round" />
<path d="M299.8 891 V901 L308.2 896 Z M309.6 891 V901 L318 896 Z" fill="none" stroke="#b9b9b9" stroke-width="1.5" stroke-linecap="round" stroke-linejoin="round" />
<path d="M350.3 894.2 A9 9 0 0 1 367.2 891.6 M367.9 887 V892 H362.9" fill="none" stroke="#333" stroke-width="1.4" stroke-linecap="round" stroke-linejoin="round" />
<path d="M368.1 897.8 A9 9 0 0 1 351.2 900.4 M350.5 905 V900 H355.5" fill="none" stroke="#333" stroke-width="1.4" stroke-linecap="round" stroke-linejoin="round" />
<path d="M1074.30 292.20 L1076.30 290.60 Q1077.60 289.90 1078.80 290.90 L1081.20 293.30 Q1082.20 294.50 1081.30 295.80 L1072.20 305.00 L1066.50 305.90 L1066.70 300.00 Z" fill="none" stroke="#eec657" stroke-width="1.4" stroke-linecap="round" stroke-linejoin="round" />
<path d="M1074.30 292.20 Q1073.90 297.60 1079.70 297.40" fill="none" stroke="#eec657" stroke-width="1.4" stroke-linecap="round" stroke-linejoin="round" />
<circle cx="1656" cy="442.9" r="9.15" fill="none" stroke="#444" stroke-width="1.4" />
<path d="M1656 438.9 V444.4" fill="none" stroke="#444" stroke-width="1.6" stroke-linecap="round" stroke-linejoin="round" />
<circle cx="1656" cy="447.0" r="0.5" fill="none" stroke="#444" stroke-width="1" />
<circle cx="1656" cy="616" r="9.15" fill="none" stroke="#444" stroke-width="1.4" />
<path d="M1656 612 V617.5" fill="none" stroke="#444" stroke-width="1.6" stroke-linecap="round" stroke-linejoin="round" />
<circle cx="1656" cy="620.1" r="0.5" fill="none" stroke="#444" stroke-width="1" /></svg>
</body></html>
